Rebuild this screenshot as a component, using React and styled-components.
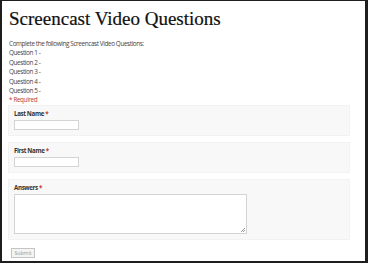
import React from "react";
import styled, { createGlobalStyle } from "styled-components";

const GlobalStyle = createGlobalStyle`
  html, body {
    margin: 0;
    padding: 0;
    background: #1a1a1a;
  }
`;

const Frame = styled.div`
  box-sizing: border-box;
  width: 368px;
  height: 263px;
  border-style: solid;
  border-color: #1e1e1e;
  border-width: 1px 3px 2px 2px;
  background: #fff;
  overflow: hidden;
  padding: 6px 0 0 7px;
  font-family: "Open Sans", "Noto Sans", sans-serif;
  color: #444;
`;

const Title = styled.h1`
  margin: 0 0 8px 0;
  font-family: "Liberation Serif", serif;
  font-weight: normal;
  font-size: 19px;
  line-height: 24px;
  color: #111;
  -webkit-text-stroke: 0.2px #111;
`;

const Intro = styled.div`
  font-size: 6.4px;
  letter-spacing: -0.4px;
  line-height: 9.4px;
  color: #444;
`;

const Required = styled(Intro)`
  color: #c0392b;
`;

const Panel = styled.div`
  box-sizing: border-box;
  width: 342px;
  margin-left: -1px;
  margin-top: ${(p) => p.$top}px;
  padding: 4px 5px 5px 5px;
  background: #f8f8f8;
  border: 1px solid #f2f2f2;
`;

const Label = styled.div`
  font-size: 6.2px;
  letter-spacing: -0.35px;
  font-weight: bold;
  line-height: 8px;
  color: #333;
  margin-bottom: 2px;
  span {
    color: #c0392b;
  }
`;

const TextInput = styled.div`
  box-sizing: border-box;
  width: 65px;
  height: 10px;
  background: #fff;
  border: 1px solid #d4d4d4;
`;

const TextArea = styled.div`
  position: relative;
  box-sizing: border-box;
  width: 233px;
  height: 40px;
  background: #fff;
  border: 1px solid #d4d4d4;
`;

const Grip = styled.span`
  position: absolute;
  right: 1px;
  bottom: 1px;
  width: 4px;
  height: 4px;
  background: linear-gradient(135deg, transparent 50%, #999 50%, #999 60%, transparent 60%, transparent 75%, #999 75%, #999 85%, transparent 85%);
`;

const SubmitButton = styled.button`
  display: block;
  box-sizing: border-box;
  margin: 8px 0 0 2px;
  width: 24px;
  height: 10px;
  padding: 0;
  font-family: "Open Sans", sans-serif;
  font-size: 5.2px;
  line-height: 8px;
  color: #999;
  background: #f4f4f4;
  border: 1px solid #c4c4c4;
`;

export default function App() {
  return (
    <>
      <GlobalStyle />
      <Frame>
        <Title>Screencast Video Questions</Title>
        <Intro>Complete the following Screencast Video Questions:</Intro>
        <Intro>Question 1 -</Intro>
        <Intro>Question 2 -</Intro>
        <Intro>Question 3 -</Intro>
        <Intro>Question 4 -</Intro>
        <Intro>Question 5 -</Intro>
        <Required>* Required</Required>
        <Panel $top={0}>
          <Label>
            Last Name <span>*</span>
          </Label>
          <TextInput />
        </Panel>
        <Panel $top={6}>
          <Label>
            First Name <span>*</span>
          </Label>
          <TextInput />
        </Panel>
        <Panel $top={6}>
          <Label>
            Answers <span>*</span>
          </Label>
          <TextArea>
            <Grip />
          </TextArea>
        </Panel>
        <SubmitButton>Submit</SubmitButton>
      </Frame>
    </>
  );
}
